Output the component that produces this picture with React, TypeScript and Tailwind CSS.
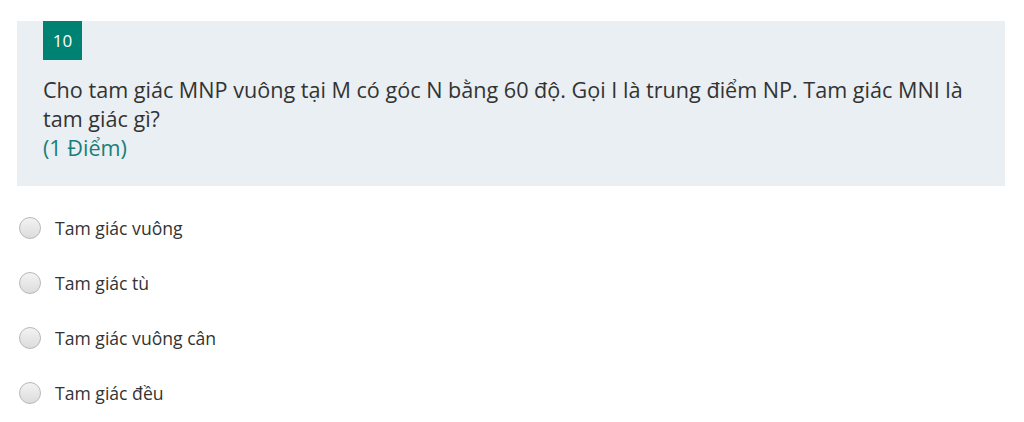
export default function App() {
  const options = ["Tam giác vuông", "Tam giác tù", "Tam giác vuông cân", "Tam giác đều"];
  return (
    <div className="w-[1024px] h-[422px] bg-white font-['Open_Sans',sans-serif] text-[#333]">
      <div className="pt-[21px] pl-[17px] pr-[19px]">
        <div className="bg-[#e9eff2] pl-[26px] pr-[26px] h-[165px]">
          <div className="w-[39px] h-[39px] bg-[#008272] text-white text-[17px] flex items-center justify-center">
            10
          </div>
          <p className="mt-[15px] text-[21.6px] leading-[29px] text-[#333]">
            Cho tam giác MNP vuông tại M có góc N bằng 60 độ. Gọi I là trung điểm NP. Tam giác MNI là tam giác gì?
            <br />
            <span className="text-[#197e7c]">(1 Điểm)</span>
          </p>
        </div>
      </div>
      <div className="pl-[19px] pt-[31px] flex flex-col gap-[33px]">
        {options.map((o) => (
          <label key={o} className="flex items-center gap-[14px] h-[22px]">
            <span className="w-[22px] h-[22px] rounded-full border border-[#b8b8b8] bg-gradient-to-b from-[#f3f3f3] to-[#dcdcdc]" />
            <span className="text-[17.6px] text-[#333]">{o}</span>
          </label>
        ))}
      </div>
    </div>
  );
}
